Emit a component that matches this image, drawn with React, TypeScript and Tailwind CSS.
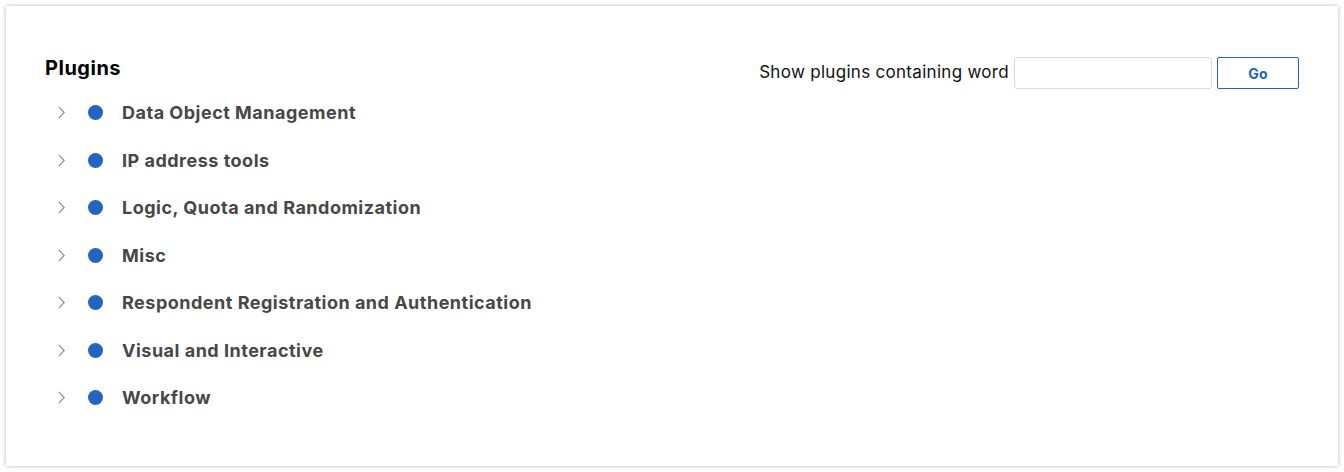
const plugins = [
  'Data Object Management',
  'IP address tools',
  'Logic, Quota and Randomization',
  'Misc',
  'Respondent Registration and Authentication',
  'Visual and Interactive',
  'Workflow',
];

const Chevron = () => (
  <svg width="7" height="13" viewBox="0 0 7 13" fill="none">
    <polyline points="0.8,0.8 6.2,6.5 0.8,12.2" stroke="#8a8a8a" strokeWidth="1.1" />
  </svg>
);

const App = () => {
  return (
    <div className="min-h-screen bg-white p-[6px] font-['Inter','Liberation_Sans',sans-serif]">
      <div className="bg-white shadow-[0_0_4px_rgba(0,0,0,0.3)] px-[39px] pt-[51px] pb-[44px]">
        <div className="flex justify-between items-start">
          <h1 className="text-[20px] leading-[24px] font-bold tracking-[0.5px] text-black -mt-px">Plugins</h1>
          <div className="flex items-center gap-[5px]">
            <label className="text-[17px] tracking-[0.3px] text-[#111]">Show plugins containing word</label>
            <input type="text" className="w-[198px] h-[32px] border border-[#d9d9d9] rounded-[3px] px-2 text-sm outline-none" />
            <button className="w-[82px] h-[32px] border border-[#2264c0] rounded-[2px] text-[14px] font-bold tracking-[0.3px] text-[#2264c0] bg-white">
              Go
            </button>
          </div>
        </div>
        <ul>
          {plugins.map((name) => (
            <li key={name} className="h-[47.5px] flex items-center pl-[13px]">
              <Chevron />
              <span className="ml-[23px] w-[15px] h-[15px] rounded-full bg-[#2264c0]" />
              <span className="ml-[19px] text-[18px] font-bold tracking-[0.5px] text-[#474747]">{name}</span>
            </li>
          ))}
        </ul>
      </div>
    </div>
  );
};

export default App;
